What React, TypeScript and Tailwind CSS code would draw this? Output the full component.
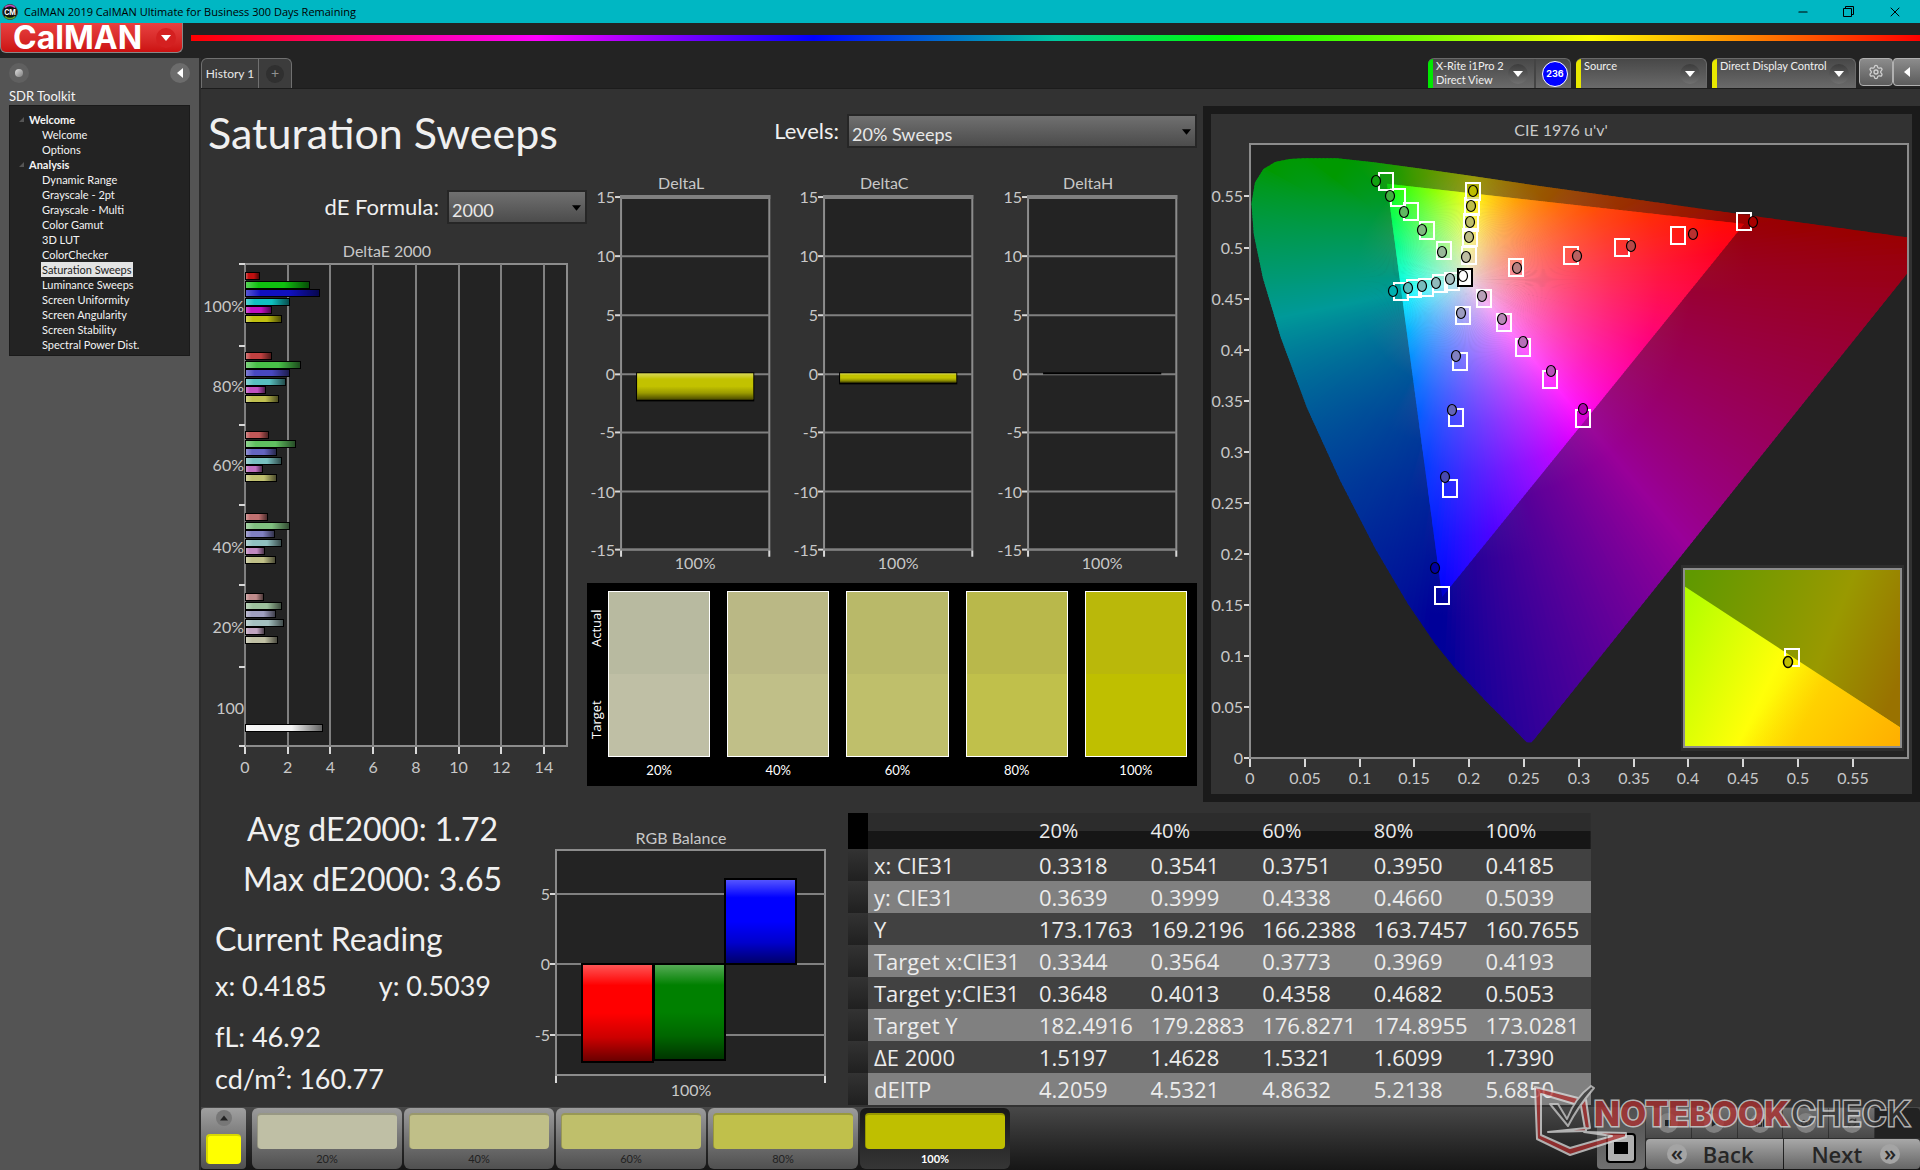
import { useId } from 'react';
import { Minus, X, Settings } from 'lucide-react';

type Point = [number, number];

const analysisPages = [
    'Dynamic Range', 'Grayscale - 2pt', 'Grayscale - Multi', 'Color Gamut', '3D LUT', 'ColorChecker',
    'Saturation Sweeps', 'Luminance Sweeps', 'Screen Uniformity', 'Screen Angularity', 'Screen Stability',
    'Spectral Power Dist.',
];

const levels = ['20%', '40%', '60%', '80%', '100%'];
const actualColors = ['#b8baa0', '#bab885', '#b9b969', '#b9b84b', '#bab80a'];
const targetColors = ['#bfbfa5', '#c0bf88', '#bfbf6b', '#c0c04b', '#bfbf00'];

const tableRows = [
    ['x: CIE31', '0.3318', '0.3541', '0.3751', '0.3950', '0.4185'],
    ['y: CIE31', '0.3639', '0.3999', '0.4338', '0.4660', '0.5039'],
    ['Y', '173.1763', '169.2196', '166.2388', '163.7457', '160.7655'],
    ['Target x:CIE31', '0.3344', '0.3564', '0.3773', '0.3969', '0.4193'],
    ['Target y:CIE31', '0.3648', '0.4013', '0.4358', '0.4682', '0.5053'],
    ['Target Y', '182.4916', '179.2883', '176.8271', '174.8955', '173.0281'],
    ['ΔE 2000', '1.5197', '1.4628', '1.5321', '1.6099', '1.7390'],
    ['dEITP', '4.2059', '4.5321', '4.8632', '5.2138', '5.6850'],
];

// bar lengths in plot pixels, order: red, green, blue, cyan, magenta, yellow
const deltaEGroups = [
    { label: '100%', top: 276, bars: [15, 65, 75, 45, 27, 37], colors: ['#c01010', '#10c010', '#1010c0', '#10c0c0', '#c010c0', '#c0c010'] },
    { label: '80%', top: 356, bars: [27, 56, 45, 41, 21, 34], colors: ['#c04040', '#48c048', '#4848c0', '#58c0c0', '#c050c0', '#c0c050'] },
    { label: '60%', top: 435, bars: [24, 51, 32, 37, 18, 32], colors: ['#c05858', '#60c060', '#6464c0', '#78c0c0', '#c070c0', '#c0c070'] },
    { label: '40%', top: 517, bars: [23, 45, 30, 37, 20, 31], colors: ['#c07070', '#80c080', '#8080c0', '#90c0c0', '#c088c0', '#c0c088'] },
    { label: '20%', top: 597, bars: [19, 37, 31, 39, 20, 33], colors: ['#c08c8c', '#9cc09c', '#a0a0c0', '#a4c0c0', '#c0a4c0', '#c0c0a4'] },
];

/* ---------- CIE 1976 colour maths ---------- */

const X0 = 1250;
const Y0 = 758;
const toX = (u: number) => X0 + u * 1096;
const toY = (v: number) => Y0 - v * 1021;

const locus: Point[] = [
    [0.2595, 0.0185], [0.2569, 0.0155], [0.2525, 0.0155], [0.2461, 0.0226], [0.2347, 0.035], [0.2161, 0.0549], [0.1877, 0.0871],
    [0.169, 0.1119], [0.1441, 0.151], [0.1147, 0.2044], [0.0828, 0.2708], [0.0521, 0.3427], [0.0282, 0.4117],
    [0.0119, 0.4698], [0.0035, 0.5131], [0.0014, 0.5432], [0.0046, 0.5638], [0.0123, 0.577], [0.0231, 0.5837],
    [0.036, 0.5868], [0.0501, 0.5875], [0.0792, 0.5875], [0.1127, 0.5835], [0.1531, 0.5776], [0.2026, 0.57],
    [0.2623, 0.5604], [0.3315, 0.5501], [0.4035, 0.5393], [0.5203, 0.5217], [0.6234, 0.5065],
];

const gamut: Point[] = [[0.4507, 0.5229], [0.125, 0.5625], [0.1754, 0.1579]];
const white: Point = [0.1978, 0.4683];

const toPath = (points: Point[]) => 'M' + points.map(([u, v]) => `${toX(u).toFixed(1)} ${toY(v).toFixed(1)}`).join('L') + 'Z';

function colorAt(px: number, py: number, dim: number, gamma: number) {
    const u = (px - X0) / 1096;
    const v = Math.max((Y0 - py) / 1021, 0.004);
    const X = (9 * u) / (4 * v);
    const Z = (12 - 3 * u - 20 * v) / (4 * v);
    const rgb = [
        3.2406 * X - 1.5372 - 0.4986 * Z,
        -0.9689 * X + 1.8758 + 0.0415 * Z,
        0.0557 * X - 0.204 + 1.057 * Z,
    ].map((c) => Math.max(c, 0));
    const max = Math.max(...rgb, 0.0001);
    return `rgb(${rgb.map((c) => Math.round(255 * dim * Math.pow(c / max, 1 / gamma))).join(',')})`;
}

const STEPS = 480;
const cx = toX(white[0]);
const cy = toY(white[1]);

function Wheel({ id, radius, dim, gamma, stops }: { id: string; radius: number; dim: number; gamma: number; stops: number[] }) {
    return (
        <>
            {Array.from({ length: STEPS }, (_, i) => {
                const at = (k: number, r: number) => {
                    const a = (k / STEPS) * Math.PI * 2;
                    return [cx + Math.cos(a) * r, cy + Math.sin(a) * r];
                };
                const [ex, ey] = at(i, radius);
                const [ax, ay] = at(i - 0.6, radius * 1.1);
                const [bx, by] = at(i + 1, radius * 1.1);
                return (
                    <g key={i}>
                        <linearGradient id={`${id}${i}`} gradientUnits="userSpaceOnUse" x1={cx} y1={cy} x2={ex} y2={ey}>
                            {stops.map((s) => (
                                <stop key={s} offset={s} stopColor={colorAt(cx + (ex - cx) * s, cy + (ey - cy) * s, dim, gamma)} />
                            ))}
                        </linearGradient>
                        <path d={`M${cx} ${cy}L${ax} ${ay}L${bx} ${by}Z`} fill={`url(#${id}${i})`} />
                    </g>
                );
            })}
        </>
    );
}

const sweeps: { target: Point[]; actual: Point[]; colors: string[] }[] = [
    {
        target: [[1444, 250], [1427, 230], [1411, 211], [1398, 197], [1386, 181]],
        actual: [[1442, 252], [1422, 230], [1404, 212], [1390, 196], [1376, 181]],
        colors: ['#98b898', '#80b880', '#60b860', '#40b040', '#10a010'],
    },
    {
        target: [[1469, 255], [1470, 237], [1471, 222], [1472, 206], [1473, 191]],
        actual: [[1466, 257], [1469, 237], [1470, 222], [1471, 206], [1473, 191]],
        colors: ['#bdbda2', '#bdbd85', '#bdbd68', '#bdbd48', '#bdbd00'],
    },
    {
        target: [[1516, 267], [1571, 255], [1622, 247], [1678, 235], [1744, 221]],
        actual: [[1517, 268], [1577, 256], [1631, 246], [1693, 234], [1753, 222]],
        colors: ['#b88080', '#b86060', '#b84848', '#b83030', '#a80000'],
    },
    {
        target: [[1452, 281], [1440, 283], [1426, 287], [1414, 288], [1401, 291]],
        actual: [[1450, 279], [1436, 283], [1422, 286], [1408, 288], [1393, 291]],
        colors: ['#a4bcbc', '#90bcbc', '#78bcbc', '#58bcbc', '#00b0b0'],
    },
    {
        target: [[1484, 298], [1504, 322], [1523, 347], [1550, 379], [1583, 418]],
        actual: [[1482, 296], [1502, 319], [1523, 342], [1551, 371], [1583, 409]],
        colors: ['#b8a0b8', '#b888b8', '#b870b8', '#b850b8', '#b000b0'],
    },
    {
        target: [[1463, 315], [1460, 361], [1456, 417], [1450, 488], [1442, 595]],
        actual: [[1461, 313], [1456, 356], [1452, 410], [1445, 477], [1435, 568]],
        colors: ['#9c9cc0', '#8080c0', '#6464b8', '#4848b0', '#0000a0'],
    },
];

/* ---------- Charts ---------- */

function Tick({ x, y, children, anchor = 'end' }: { x: number; y: number; children: string; anchor?: 'start' | 'middle' | 'end' }) {
    return <text x={x} y={y} textAnchor={anchor} fontSize="16" fill="#c8c8c8">{children}</text>;
}

function DeltaEChart() {
    return (
        <svg viewBox="201 236 386 550" className="w-full block">
            <defs>
                <linearGradient id="barShade">
                    <stop offset="0" stopColor="#fff" stopOpacity=".3" />
                    <stop offset=".2" stopColor="#fff" stopOpacity="0" />
                    <stop offset=".6" stopColor="#000" stopOpacity="0" />
                    <stop offset="1" stopColor="#000" stopOpacity=".6" />
                </linearGradient>
            </defs>
            <Tick x={387} y={257} anchor="middle">DeltaE 2000</Tick>
            <rect x="245" y="264" width="322" height="482" fill="#232323" stroke="#8c8c8c" strokeWidth="2" />
            {[0, 2, 4, 6, 8, 10, 12, 14].map((n) => (
                <g key={n}>
                    <path d={`M${245 + Math.round(n * 21.35)} 264V746`} stroke="#808080" strokeWidth="2" />
                    <path d={`M${245 + Math.round(n * 21.35)} 747v7`} stroke="#d8d8d8" strokeWidth="2" />
                    <Tick x={245 + n * 21.35} y={773} anchor="middle">{String(n)}</Tick>
                </g>
            ))}
            {[264, 346, 425, 505, 585, 667, 746].map((y) => (
                <path key={y} d={`M239 ${y}h6`} stroke="#d8d8d8" strokeWidth="2" />
            ))}
            {deltaEGroups.map((group) => (
                <g key={group.label}>
                    <Tick x={244} y={group.top + 36}>{group.label}</Tick>
                    {group.bars.map((w, i) => {
                        const y = Math.round(group.top + i * 8.5) - 4;
                        return (
                            <g key={i}>
                                <rect x="245" y={y} width={w} height="8" fill="#000" />
                                <rect x="246" y={y + 1} width={w - 2} height="6" fill={group.colors[i]} />
                                <rect x="246" y={y + 1} width={w - 2} height="6" fill="url(#barShade)" />
                            </g>
                        );
                    })}
                </g>
            ))}
            <Tick x={244} y={714}>100</Tick>
            <rect x="245" y="724" width="78" height="8" fill="#000" />
            <rect x="246" y="725" width="76" height="6" fill="#f4f4f4" />
            <rect x="246" y="725" width="76" height="6" fill="url(#barShade)" />
        </svg>
    );
}

function GlossStops() {
    return (
        <>
            <stop offset="0" stopColor="#fff" stopOpacity=".35" />
            <stop offset=".22" stopColor="#fff" stopOpacity="0" />
            <stop offset=".5" stopColor="#000" stopOpacity="0" />
            <stop offset=".75" stopColor="#000" stopOpacity=".2" />
            <stop offset="1" stopColor="#000" stopOpacity=".6" />
        </>
    );
}

function DeltaChart({ title, depth }: { title: string; depth: number }) {
    const gloss = useId();
    const lines: [string, number][] = [['15', 32], ['10', 91], ['5', 150], ['0', 209], ['-5', 267], ['-10', 326], ['-15', 384]];
    return (
        <svg viewBox="0 0 203 417" className="w-full block">
            <defs>
                <linearGradient id={gloss} x2="0" y2="1"><GlossStops /></linearGradient>
            </defs>
            <Tick x={94} y={24} anchor="middle">{title}</Tick>
            <rect x="34" y="31" width="148" height="353" fill="#232323" stroke="#8c8c8c" strokeWidth="2" />
            <path d="M33 32h150" stroke="#808080" strokeWidth="4" />
            {lines.map(([label, y]) => (
                <g key={label}>
                    <path d={`M34 ${y}h148`} stroke="#808080" strokeWidth="2" />
                    <path d={`M28 ${y}h5`} stroke="#d8d8d8" strokeWidth="2" />
                    <Tick x={28} y={y + 6}>{label}</Tick>
                </g>
            ))}
            <path d="M34 385v6M182 385v6" stroke="#d8d8d8" strokeWidth="2" />
            <rect x="49" y="207" width="118" height={depth} fill="#000" />
            {depth > 4 && (
                <>
                    <rect x="50" y="208" width="116" height={depth - 3} fill="#c2c200" />
                    <rect x="50" y="208" width="116" height={depth - 3} fill={`url(#${gloss})`} />
                </>
            )}
            <Tick x={108} y={403} anchor="middle">100%</Tick>
        </svg>
    );
}

function RgbBalance() {
    const bars = [
        { x: 582, y: 964, h: 98, fill: '#ff0000' },
        { x: 654, y: 964, h: 96, fill: '#008000' },
        { x: 725, y: 879, h: 85, fill: '#0000ff' },
    ];
    return (
        <svg viewBox="530 820 306 286" className="w-full block">
            <defs>
                <linearGradient id="rgbGloss" x2="0" y2="1"><GlossStops /></linearGradient>
            </defs>
            <Tick x={681} y={844} anchor="middle">RGB Balance</Tick>
            <rect x="556" y="850" width="269" height="225" fill="#232323" stroke="#8c8c8c" strokeWidth="2" />
            {[['5', 894], ['0', 964], ['-5', 1035]].map(([label, y]) => (
                <g key={label}>
                    <path d={`M556 ${y}h269`} stroke="#808080" strokeWidth="2" />
                    <path d={`M550 ${y}h5`} stroke="#d8d8d8" strokeWidth="2" />
                    <Tick x={550} y={Number(y) + 6}>{String(label)}</Tick>
                </g>
            ))}
            <path d="M556 1076v7M825 1076v7" stroke="#d8d8d8" strokeWidth="2" />
            {bars.map((b) => (
                <g key={b.x}>
                    <rect x={b.x} y={b.y} width="71" height={b.h} fill={b.fill} />
                    <rect x={b.x} y={b.y} width="71" height={b.h} fill="url(#rgbGloss)" stroke="#000" strokeWidth="2" />
                </g>
            ))}
            <Tick x={691} y={1096} anchor="middle">100%</Tick>
        </svg>
    );
}

function CieChart() {
    const ticks = [0, 0.05, 0.1, 0.15, 0.2, 0.25, 0.3, 0.35, 0.4, 0.45, 0.5, 0.55];
    return (
        <svg viewBox="1211 114 701 680" className="w-full block">
            <defs>
                <clipPath id="plotArea"><rect x="1250" y="144" width="658" height="614" /></clipPath>
                <clipPath id="locusArea"><path d={toPath(locus)} /></clipPath>
                <clipPath id="gamutArea"><path d={toPath(gamut)} /></clipPath>
                <linearGradient id="insetIn" gradientUnits="userSpaceOnUse" x1="1684" y1="610" x2="1826" y2="680">
                    <stop offset="0" stopColor="#b4ff00" />
                    <stop offset=".68" stopColor="#ffff08" />
                    <stop offset="1" stopColor="#ffe000" />
                </linearGradient>
                <linearGradient id="insetOut" gradientUnits="userSpaceOnUse" x1="1690" y1="580" x2="1905" y2="665">
                    <stop offset="0" stopColor="#609900" />
                    <stop offset=".65" stopColor="#999900" />
                    <stop offset="1" stopColor="#997200" />
                </linearGradient>
                <linearGradient id="insetWarm" gradientUnits="userSpaceOnUse" x1="1790" y1="670" x2="1895" y2="745">
                    <stop offset="0" stopColor="#ffb000" stopOpacity="0" />
                    <stop offset="1" stopColor="#ffb000" />
                </linearGradient>
            </defs>
            <Tick x={1561} y={136} anchor="middle">CIE 1976 u'v'</Tick>
            <rect x="1250" y="144" width="658" height="614" fill="#232323" />
            <g clipPath="url(#plotArea)">
                <g clipPath="url(#locusArea)">
                    <Wheel id="outer" radius={560} dim={0.6} gamma={1.5} stops={[0.06, 0.12, 0.2, 0.3, 0.4, 0.5, 0.6, 0.7, 0.85, 1]} />
                </g>
                <g clipPath="url(#gamutArea)">
                    <Wheel id="inner" radius={320} dim={1} gamma={1.25} stops={[0, 0.04, 0.08, 0.12, 0.16, 0.2, 0.25, 0.3, 0.36, 0.45, 0.6, 0.8, 1]} />
                </g>
            </g>
            <rect x="1250" y="144" width="658" height="614" fill="none" stroke="#8c8c8c" strokeWidth="2" />
            {ticks.map((t) => (
                <g key={t}>
                    <path d={`M${Math.round(toX(t))} 759v8M1244 ${Math.round(toY(t))}h5`} stroke="#d8d8d8" strokeWidth="2" />
                    <Tick x={1243} y={Math.round(toY(t)) + 6}>{String(t)}</Tick>
                    <Tick x={Math.round(toX(t))} y={784} anchor="middle">{String(t)}</Tick>
                </g>
            ))}
            {sweeps.map((sweep, s) => (
                <g key={s}>
                    {sweep.target.map(([x, y], i) => (
                        <rect key={i} x={x - 7} y={y - 8} width="14" height="17" fill={i === 4 ? sweep.colors[4] : 'none'} fillOpacity={i === 4 ? 0.5 : 1} stroke="#fff" strokeWidth="2" />
                    ))}
                </g>
            ))}
            <rect x="1458" y="269" width="14" height="17" fill="#fff" stroke="#000" strokeWidth="2" />
            {sweeps.map((sweep, s) => (
                <g key={s}>
                    {sweep.actual.map(([x, y], i) => (
                        <ellipse key={i} cx={x} cy={y} rx="4.5" ry="5.5" fill={sweep.colors[i]} stroke="#000" strokeWidth="1.2" />
                    ))}
                </g>
            ))}
            <ellipse cx="1463" cy="276" rx="4.5" ry="5.5" fill="#fff" stroke="#000" strokeWidth="1.2" />
            {/* magnified view of the selected point */}
            <rect x="1681" y="565" width="223" height="186" fill="#2e2e2e" />
            <rect x="1684" y="569" width="217" height="178" fill="url(#insetOut)" />
            <path d="M1684 586L1901 728V747H1684Z" fill="url(#insetIn)" />
            <path d="M1684 586L1901 728V747H1684Z" fill="url(#insetWarm)" />
            <rect x="1684" y="569" width="217" height="178" fill="none" stroke="#8c8c8c" strokeWidth="2" />
            <path d="M1785 656v-7h14v17h-7" fill="none" stroke="#fff" strokeWidth="2" />
            <ellipse cx="1788" cy="662" rx="4.5" ry="5.5" fill="#bdbd00" stroke="#000" strokeWidth="1.5" />
        </svg>
    );
}

/* ---------- Small controls ---------- */

function Caret({ className }: { className: string }) {
    return <svg viewBox="0 0 10 6" className={className}><path d="M0 0h10L5 6Z" fill="currentColor" /></svg>;
}

function ComboBox({ id, value, className }: { id: string; value: string; className: string }) {
    return (
        <div className={`relative h-[34px] ${className}`}>
            <select id={id} defaultValue={value} className="appearance-none w-full h-full pl-[3px] pt-[6px] text-[18px] leading-6 text-[#e8e8e8] border-2 border-[#262626] bg-linear-to-b from-[#707070] to-[#4c4c4c]">
                <option>{value}</option>
            </select>
            <Caret className="absolute right-[6px] top-[14px] w-[9px] h-[8px] text-black pointer-events-none" />
        </div>
    );
}

function DeviceTab({ label, detail, stripe, badge, className }: { label: string; detail?: string; stripe: string; badge?: string; className: string }) {
    return (
        <div className={`flex h-[30px] rounded-t-md overflow-hidden border-t border-r border-[#6a6a6a] bg-linear-to-b from-[#484848] to-[#6a6a6a] text-[11px] leading-[14px] text-[#f0f0f0] ${className}`}>
            <div className={`w-[5px] shrink-0 ${stripe}`} />
            <button className="flex flex-1 items-center justify-between pl-[3px] pr-[6px] text-left whitespace-nowrap">
                <span className="self-start">{label}<br />{detail}</span>
                <span className="w-5 h-5 -ml-2 shrink-0 rounded-full bg-linear-to-b from-[#3c3c3c] to-[#707070] flex items-center justify-center">
                    <Caret className="w-[10px] h-[6px] text-white" />
                </span>
            </button>
            {badge && (
                <div className="w-9 pl-1 border-l-2 border-[#444] flex items-center justify-center">
                    <span className="w-[26px] h-[26px] rounded-full bg-[#0000ff] border border-white text-white text-[9px] font-bold flex items-center justify-center font-[Inter,sans-serif]">{badge}</span>
                </div>
            )}
        </div>
    );
}

/* ---------- Page sections ---------- */

function TitleBar() {
    return (
        <header className="h-[23px] bg-[#00b7c3] flex items-center justify-between text-black">
            <div className="flex items-center pl-[2px] gap-[6px]">
                <svg viewBox="0 0 16 16" className="w-4 h-4">
                    <circle cx="8" cy="8" r="7.5" fill="#111" stroke="#444" />
                    <path d="M3 3.500a7 7 0 0 1 10 0" stroke="#c050c0" strokeWidth="1.500" fill="none" />
                    <path d="M3 12.500a7 7 0 0 0 10 0" stroke="#60b030" strokeWidth="1.500" fill="none" />
                    <text x="8" y="10.500" textAnchor="middle" fontSize="7" fontWeight="700" fill="#fff" fontFamily="Inter, sans-serif">CM</text>
                </svg>
                <span className="text-[11px] leading-4 font-[Open_Sans,sans-serif]">CalMAN 2019 CalMAN Ultimate for Business 300 Days Remaining</span>
            </div>
            <div className="flex h-5 items-center gap-[33px] pr-[17px]">
                <button aria-label="Minimize"><Minus size={14} strokeWidth={2} /></button>
                <button aria-label="Restore">
                    <svg viewBox="0 0 11 11" className="w-[11px] h-[11px]" fill="none" stroke="#000"><path d="M.5 2.500h8v8h-8zM2.500 2.500v-2h8v8h-2" /></svg>
                </button>
                <button aria-label="Close"><X size={16} strokeWidth={1.5} /></button>
            </div>
        </header>
    );
}

function Sidebar() {
    return (
        <aside className="w-[201px] shrink-0 px-[9px] bg-[#545454] border-r-2 border-[#2a2a2a] text-[#f4f4f4]">
            <div className="flex justify-between h-[29px] items-center">
                <span className="w-5 h-5 rounded-full bg-[#606060] flex items-center justify-center">
                    <span className="w-2 h-2 rounded-full bg-linear-to-br from-[#e0e0e0] to-[#808080]" />
                </span>
                <button aria-label="Collapse" className="w-5 h-5 rounded-full bg-[#6c6c6c] flex items-center justify-center">
                    <svg viewBox="0 0 6 10" className="w-[6px] h-[10px]"><path d="M6 0v10L0 5Z" fill="#fff" /></svg>
                </button>
            </div>
            <div className="text-[13px] leading-[18px]">SDR Toolkit</div>
            <nav className="h-[251px] pt-[6px] pl-[9px] bg-[#232323] border border-[#1a1a1a] text-[11px] leading-[15px]">
                <SectionTitle>Welcome</SectionTitle>
                <NavLink>Welcome</NavLink>
                <NavLink>Options</NavLink>
                <SectionTitle>Analysis</SectionTitle>
                {analysisPages.map((page) => <NavLink key={page}>{page}</NavLink>)}
            </nav>
        </aside>
    );
}

function SectionTitle({ children }: { children: string }) {
    return (
        <div className="flex items-center font-bold">
            <svg viewBox="0 0 5 5" className="w-[5px] h-[5px] mr-[5px]"><path d="M5 0v5H0Z" fill="#555" /></svg>
            {children}
        </div>
    );
}

function NavLink({ children }: { children: string }) {
    const active = children === 'Saturation Sweeps';
    return (
        <a href="#" className={`block w-fit ml-[22px] px-px ${active ? 'bg-[#e4e4e4] text-[#222]' : ''}`}>{children}</a>
    );
}

function SwatchPanel() {
    return (
        <div className="flex h-[203px] bg-black pt-2 pr-[10px] text-white">
            <div className="w-[21px] pr-1 flex flex-col h-[166px] font-[Open_Sans,sans-serif] text-[13px] leading-4">
                <span className="flex-1 flex items-center justify-center [writing-mode:vertical-rl] rotate-180 pt-2">Actual</span>
                <span className="flex-1 flex items-center justify-center [writing-mode:vertical-rl] rotate-180 pb-2">Target</span>
            </div>
            <div className="flex-1 grid grid-cols-5 gap-[17px]">
                {levels.map((level, i) => (
                    <div key={level}>
                        <div className="h-[166px] border border-white flex flex-col">
                            <div className="flex-1" style={{ backgroundColor: actualColors[i] }} />
                            <div className="flex-1" style={{ backgroundColor: targetColors[i] }} />
                        </div>
                        <div className="text-center text-[13px] leading-[26px]">{level}</div>
                    </div>
                ))}
            </div>
        </div>
    );
}

function DataTable() {
    return (
        <table className="w-[743px] self-start mt-[9px] table-fixed font-[Open_Sans,sans-serif] text-[22px] leading-6 text-[#ececec] text-left">
            <colgroup>
                <col className="w-5" />
                <col className="w-[165px]" />
            </colgroup>
            <thead>
                <tr className="h-9 bg-linear-to-b from-[#2c2c2c] from-50% to-[#161616] to-50% text-[20px]">
                    <th className="bg-black" />
                    <th />
                    {levels.map((level) => <th key={level} className="pl-[6px] font-normal">{level}</th>)}
                </tr>
            </thead>
            <tbody>
                {tableRows.map(([name, ...values]) => (
                    <tr key={name} className="h-8 bg-[#414141] even:bg-[#808080]">
                        <td className="bg-linear-to-b from-[#333] to-[#202020]" />
                        <th scope="row" className="pl-[6px] font-normal whitespace-nowrap">{name}</th>
                        {values.map((value, i) => <td key={i} className="pl-[6px]">{value}</td>)}
                    </tr>
                ))}
            </tbody>
        </table>
    );
}

function Readings() {
    return (
        <div className="w-[329px] pl-[14px] text-[#f0f0f0]">
            <div className="text-center text-[32px] leading-[50px]">
                <div>Avg dE2000: 1.72</div>
                <div>Max dE2000: 3.65</div>
            </div>
            <div className="text-[32px] leading-[50px] pt-[10px]">Current Reading</div>
            <div className="flex gap-[52px] text-[27px] leading-[44px]">
                <span>x: 0.4185</span>
                <span>y: 0.5039</span>
            </div>
            <div className="text-[27px] leading-[42px] pt-[8px]">fL: 46.92</div>
            <div className="text-[27px] leading-[42px]">cd/m²: 160.77</div>
        </div>
    );
}

function PatchButton({ index }: { index: number }) {
    const active = index === 4;
    return (
        <button className={`w-[150px] h-[61px] px-[5px] pt-[5px] rounded-md bg-linear-to-b ${active ? 'from-[#181818] to-[#363636] text-white font-bold' : 'from-[#9c9c9c] to-[#505050] text-[#222]'}`}>
            <span className="block h-9 rounded border-t-2 border-l border-black/20" style={{ backgroundColor: targetColors[index] }} />
            <span className="block text-[11px] leading-5">{levels[index]}</span>
        </button>
    );
}

const transport = [
    <path key="s" d="M4 4h8v8H4z" fill="#222" />,
    <path key="p" d="M5 3l8 5-8 5z" fill="#222" />,
    <path key="r" d="M3 3v10M13 3v10M6 6h4v6H6z" stroke="#222" strokeWidth="2" fill="none" />,
    <path key="l" d="M2 8c2-5 4-5 6 0s4 5 6 0c-2-5-4-5-6 0s-4 5-6 0z" stroke="#333" strokeWidth="1.500" fill="none" />,
    <path key="c" d="M13 5A6 6 0 0 0 3 7M3 11a6 6 0 0 0 10-2M13 2v3h-3M3 14v-3h3" stroke="#333" strokeWidth="1.500" fill="none" />,
];

function Watermark() {
    return (
        <svg viewBox="0 0 386 76" className="absolute right-0 bottom-[10px] w-[386px] h-[76px] pointer-events-none" opacity=".75">
            <g strokeLinejoin="round" fill="none">
                <path d="M1 3L52 16 56 44 51 45 47 22 7 10 7 51 36 64 78 52 50 48 92 49 92 53 36 71 3 55Z" fill="#b03030" stroke="#ddd" strokeWidth="2" />
                <path d="M16 20h8l9 15C38 22 46 10 57 2l3 2C48 18 40 30 34 42Z" fill="#333" stroke="#ccc" strokeWidth="2" />
                <path d="M14 48l38-4v3Z" fill="#b03030" stroke="#ddd" strokeWidth="2" />
            </g>
            <g fontFamily="Inter, sans-serif" fontSize="34" paintOrder="stroke" stroke="#ddd" strokeWidth="3">
                <text x="60" y="42" fontWeight="800" fill="#b03030">NOTEBOOK</text>
                <text x="257" y="42" fontWeight="500" fill="#333">CHECK</text>
            </g>
        </svg>
    );
}

function BottomBar() {
    return (
        <footer className="relative h-[63px] flex items-start pt-px bg-linear-to-b from-[#484848] to-[#161616]">
            <div className="w-[45px] h-[61px] mr-[6px] rounded bg-linear-to-b from-[#a0a0a0] to-[#505050] flex flex-col items-center pt-[2px]">
                <button aria-label="Expand" className="w-4 h-4 rounded-full bg-[#777] flex items-center justify-center">
                    <Caret className="w-2 h-[6px] rotate-180 text-[#222]" />
                </button>
                <span className="mt-2 w-[35px] h-[30px] rounded-sm bg-[#ffff00] border-t-2 border-l-2 border-[#d8d800]" />
            </div>
            <div className="flex gap-[2px]">
                {levels.map((level, i) => <PatchButton key={level} index={i} />)}
            </div>
            <div className="ml-auto w-[323px] h-[61px] flex gap-px">
                <button aria-label="Pattern window" className="w-12 rounded bg-linear-to-b from-[#505050] to-[#707070] flex items-end justify-center pb-[6px]">
                    <span className="w-[30px] h-[30px] rounded border-2 border-black bg-[#b0b0b0] flex items-center justify-center">
                        <span className="w-[14px] h-3 bg-black" />
                    </span>
                </button>
                <div className="flex-1 flex flex-col gap-px">
                    <div className="grid grid-cols-6 gap-px h-[30px]">
                        {transport.map((icon, i) => (
                            <button key={i} aria-label={`Transport ${i + 1}`} className="bg-linear-to-b from-[#707070] to-[#484848] flex items-center justify-center">
                                <span className="w-5 h-5 rounded-full bg-[#808080] flex items-center justify-center">
                                    <svg viewBox="0 0 16 16" className="w-3 h-3">{icon}</svg>
                                </span>
                            </button>
                        ))}
                        <span className="bg-[#222] rounded-tr" />
                    </div>
                    <div className="grid grid-cols-2 gap-px h-[30px] font-[Open_Sans,sans-serif] font-semibold text-[22px] leading-7 text-[#262626]">
                        <button className="rounded-l bg-linear-to-b from-[#a8a8a8] to-[#666] flex items-center justify-center gap-4 pr-2">
                            <span className="w-5 h-5 rounded-full bg-[#a4a4a4] leading-4 text-center">«</span>Back
                        </button>
                        <button className="rounded-r bg-linear-to-b from-[#a8a8a8] to-[#666] flex items-center justify-center gap-[18px] pl-2">
                            Next<span className="w-5 h-5 rounded-full bg-[#a4a4a4] leading-4 text-center">»</span>
                        </button>
                    </div>
                </div>
            </div>
            <Watermark />
        </footer>
    );
}

export default function App() {
    return (
        <div className="min-h-screen flex flex-col bg-[#232323] font-[Lato,sans-serif]">
            <TitleBar />
            <div className="h-[35px] flex items-start">
                <button className="w-[183px] h-[30px] flex items-center justify-between pl-3 pr-[6px] rounded-b-md border border-t-0 border-[#888] bg-linear-to-b from-[#e84040] to-[#cc1010] text-white">
                    <span className="text-[32px] leading-7 font-bold font-[Inter,sans-serif]">CalMAN</span>
                    <span className="w-5 h-5 rounded-full bg-[#d42020] flex items-center justify-center">
                        <Caret className="w-[10px] h-[6px]" />
                    </span>
                </button>
                <div className="flex-1 ml-2 mt-3 h-[6px] bg-[linear-gradient(to_right,#f00,#f0f_20%,#00f_36%,#00c8a0_50%,#0f0_60%,#7f0_71%,#ff0_81%,#ffa000_88%,#f00)]" />
            </div>
            <div className="flex-1 flex">
                <Sidebar />
                <main className="flex-1 min-w-0 flex flex-col">
                    <div className="flex h-[31px] border-b border-[#1c1c1c]">
                        <button className="w-[58px] h-[30px] rounded-tl-md border border-b-0 border-[#707070] bg-[#3c3c3c] text-[#e8e8e8] text-[12px]">History 1</button>
                        <button className="w-[33px] h-[30px] rounded-tr-md border border-l-0 border-b-0 border-[#707070] bg-[#3c3c3c] flex items-center justify-center">
                            <span className="w-[18px] h-[18px] rounded-full bg-[#303030] text-[#909090] text-sm leading-4">+</span>
                        </button>
                        <div className="ml-auto flex">
                            <DeviceTab label="X-Rite i1Pro 2" detail="Direct View" stripe="bg-[#00e800]" badge="236" className="w-[143px] mr-[5px]" />
                            <DeviceTab label="Source" stripe="bg-[#e8e800]" className="w-[131px] mr-[5px]" />
                            <DeviceTab label="Direct Display Control" stripe="bg-[#e8e800]" className="w-[144px] mr-[3px]" />
                            <button aria-label="Settings" className="w-[34px] h-7 rounded border border-[#b0b0b0] bg-linear-to-b from-[#8c8c8c] to-[#5c5c5c] flex items-center justify-center">
                                <Settings size={16} strokeWidth={2} color="#d0d0d0" />
                            </button>
                            <button aria-label="Show panel" className="w-[27px] h-7 rounded-l border border-r-0 border-[#b0b0b0] bg-linear-to-b from-[#8c8c8c] to-[#5c5c5c] flex items-center justify-center">
                                <svg viewBox="0 0 6 10" className="w-[6px] h-[10px]"><path d="M6 0v10L0 5Z" fill="#fff" /></svg>
                            </button>
                        </div>
                    </div>
                    <div className="flex-1 bg-[#323232]">
                        <div className="grid grid-cols-[386fr_610fr_723fr]">
                            <section className="min-w-0">
                                <h1 className="pl-[7px] pt-4 text-[43px] leading-[56px] text-[#f0f0f0] whitespace-nowrap">Saturation Sweeps</h1>
                                <div className="flex justify-end items-center mt-[29px] mb-[12px] gap-2">
                                    <label htmlFor="formula" className="text-[22px] leading-8 text-[#f0f0f0]">dE Formula:</label>
                                    <ComboBox id="formula" value="2000" className="w-[140px]" />
                                </div>
                                <DeltaEChart />
                            </section>
                            <section className="min-w-0">
                                <div className="flex justify-end items-center pt-[25px] mb-[17px] gap-2">
                                    <label htmlFor="levels" className="text-[22px] leading-8 text-[#f0f0f0]">Levels:</label>
                                    <ComboBox id="levels" value="20% Sweeps" className="w-[350px]" />
                                </div>
                                <div className="grid grid-cols-3">
                                    <DeltaChart title="DeltaL" depth={29} />
                                    <DeltaChart title="DeltaC" depth={12} />
                                    <DeltaChart title="DeltaH" depth={2} />
                                </div>
                                <SwatchPanel />
                            </section>
                            <section className="min-w-0 self-start mt-[17px] ml-[6px] border-8 border-[#1a1a1a]">
                                <CieChart />
                            </section>
                        </div>
                        <div className="flex pt-[2px]">
                            <Readings />
                            <div className="w-[306px] mt-4 mr-3"><RgbBalance /></div>
                            <DataTable />
                        </div>
                    </div>
                    <BottomBar />
                </main>
            </div>
        </div>
    );
}
